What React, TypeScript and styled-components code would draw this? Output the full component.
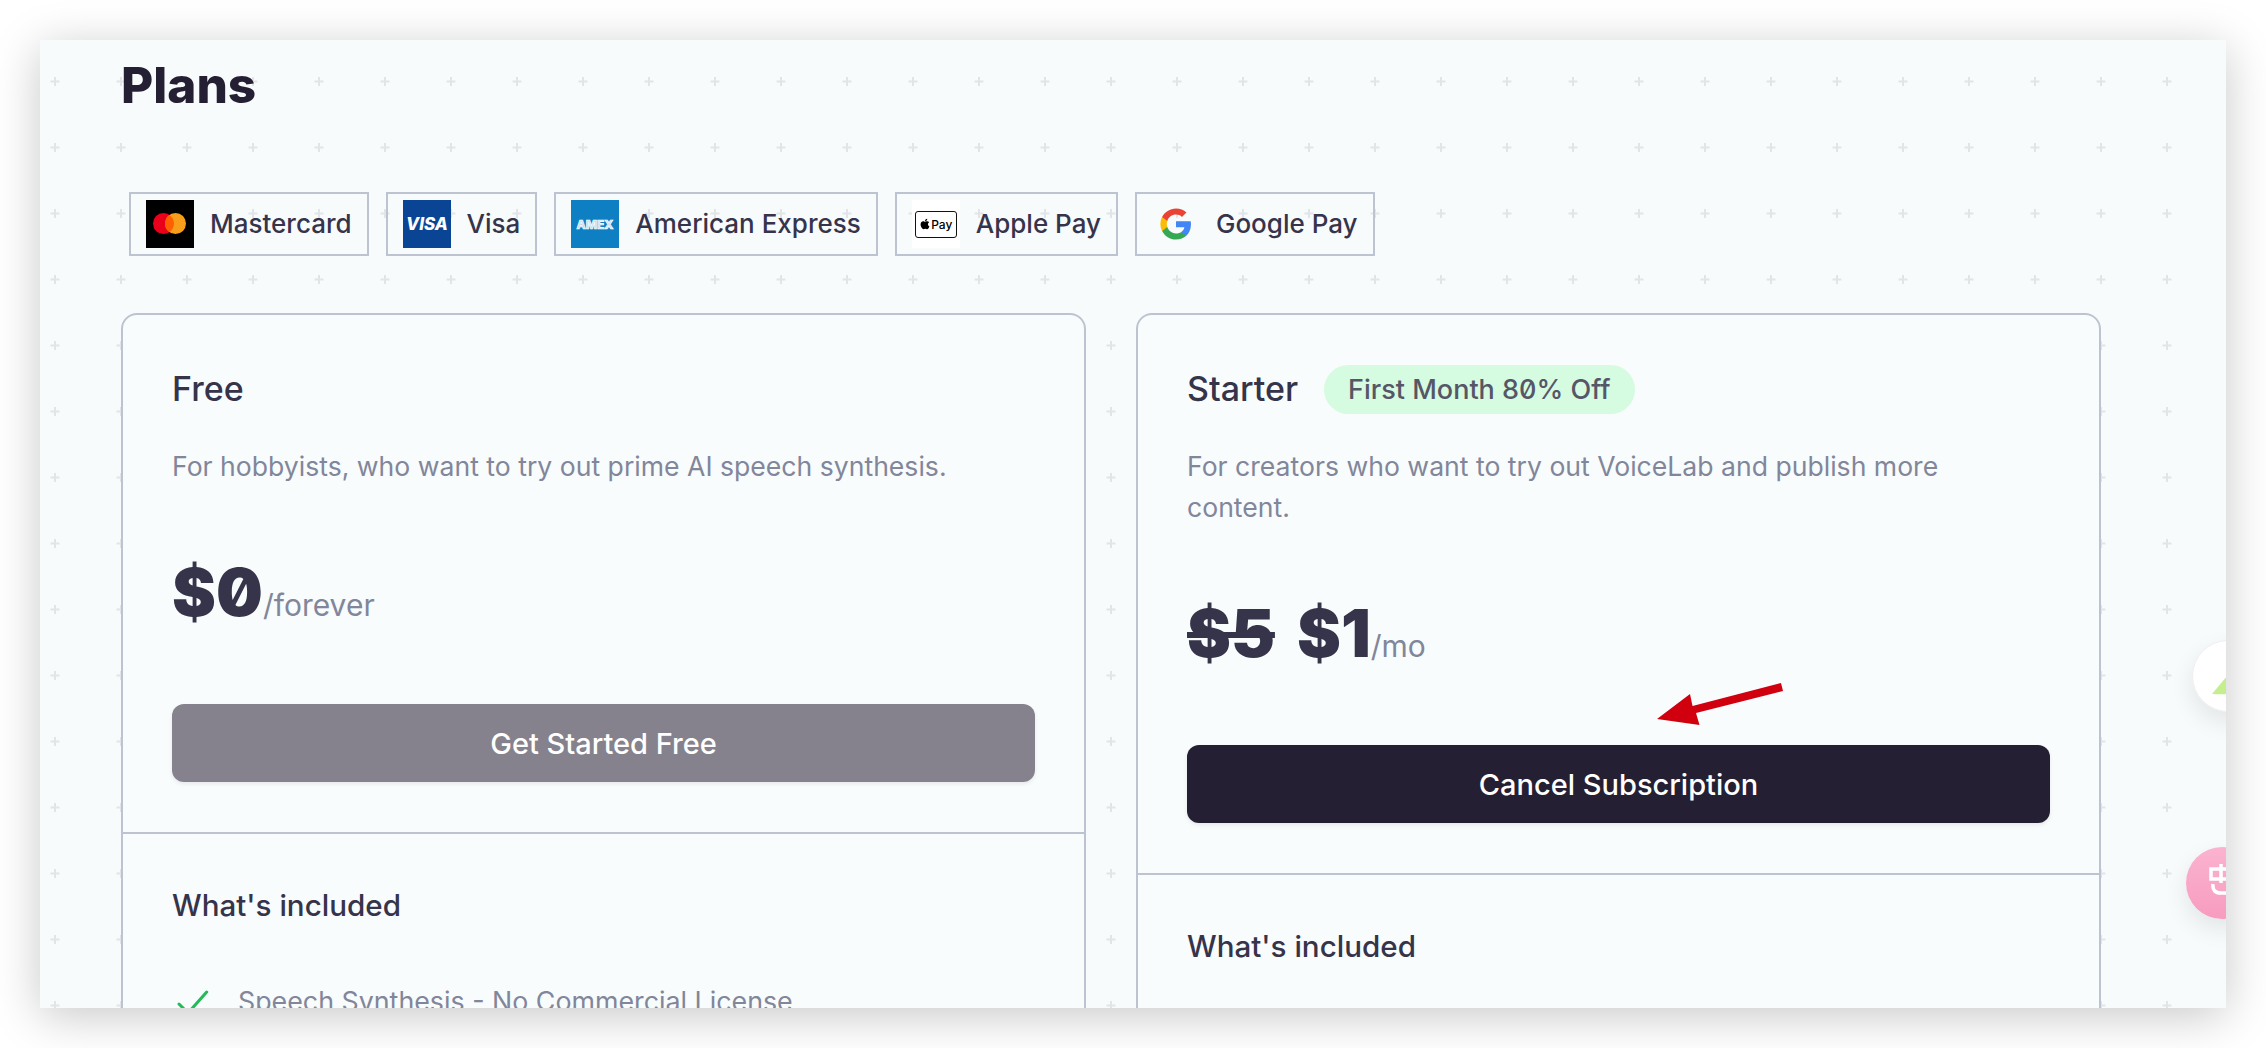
import React from 'react'
import styled, { createGlobalStyle } from 'styled-components'
import { FaApple } from 'react-icons/fa'

const plus = `url("data:image/svg+xml,%3Csvg xmlns='http://www.w3.org/2000/svg' width='66' height='66'%3E%3Cpath d='M15 37v9M10.500 41.500h9' stroke='%23e2e5e8' stroke-width='2' fill='none'/%3E%3C/svg%3E")`

const GlobalStyle = createGlobalStyle`
    html, body {
        margin: 0;
        background: #fff;
    }
    * {
        box-sizing: border-box;
    }
`

const Page = styled.div`
    width: 2266px;
    height: 1048px;
    padding: 40px;
    overflow: hidden;
    font-family: 'Inter', 'Liberation Sans', sans-serif;
`

const Shot = styled.div`
    position: relative;
    width: 2186px;
    height: 968px;
    overflow: hidden;
    padding: 16px 125px 0 81px;
    background-color: #f8fbfc;
    background-image: ${plus};
    box-shadow: 0 8px 44px rgba(0, 0, 0, 0.22);
`

const Title = styled.h1`
    margin: 0;
    font-size: 49.5px;
    line-height: 58px;
    font-weight: 800;
    color: #251f33;
`

const Methods = styled.div`
    display: flex;
    gap: 17px;
    margin: 78px 0 0 8px;
`

const Method = styled.div`
    display: flex;
    align-items: center;
    gap: 16px;
    height: 64px;
    padding: 0 15px;
    border: 2px solid #bec3d2;
    font-size: 26px;
    font-weight: 500;
    color: #36344a;
`

const MethodName = styled.span`
    padding-bottom: 2px;
`

const Logo = styled.svg`
    display: block;
    width: 48px;
    height: 48px;
    flex: none;
`

const ApplePay = styled.div`
    display: flex;
    align-items: center;
    justify-content: center;
    width: 48px;
    height: 48px;
    background: #fff;
`

const ApplePayMark = styled.div`
    display: flex;
    align-items: center;
    justify-content: center;
    width: 42px;
    height: 27px;
    border: 1px solid #111;
    border-radius: 3px;
    font-size: 12px;
    font-weight: 500;
    color: #000;
`

const Cards = styled.div`
    display: grid;
    grid-template-columns: 1fr 1fr;
    gap: 50px;
    margin-top: 57px;
    align-items: start;
`

const Card = styled.section`
    position: relative;
    border: 2px solid #bec3d2;
    border-radius: 16px;
    background: #f8fcfd;
    height: 800px;
`

const CardTop = styled.div`
    padding: 50px 49px;
    border-bottom: 2px solid #bec3d2;
`

const CardHead = styled.div`
    display: flex;
    align-items: center;
    gap: 26px;
    height: 49px;
`

const CardName = styled.h2`
    margin: 0;
    padding-bottom: 2px;
    font-size: 34px;
    font-weight: 500;
    color: #36344a;
`

const Badge = styled.span`
    display: flex;
    align-items: center;
    height: 49px;
    padding: 0 24px;
    border-radius: 25px;
    background: #d5fbe0;
    font-size: 27px;
    font-weight: 500;
    color: #565668;
    font-feature-settings: 'zero';
`

const Desc = styled.p`
    margin: 32px 0 0;
    max-width: 840px;
    font-size: 26.6px;
    line-height: 41px;
    color: #82869a;
`

const Price = styled.div`
    display: flex;
    align-items: baseline;
    margin-top: 60px;
    height: 90px;
    font-size: 66px;
    line-height: 90px;
    font-weight: 900;
    color: #36344a;
    font-feature-settings: 'zero';
`

const OldPrice = styled.s`
    margin-right: 22px;
`

const Per = styled.span`
    font-size: 30px;
    font-weight: 400;
    color: #82869a;
`

const CardButton = styled.button<{ $muted?: boolean }>`
    display: block;
    width: 100%;
    height: 78px;
    margin-top: 67px;
    border: 0;
    border-radius: 12px;
    background: ${(p) => (p.$muted ? '#85828e' : '#251f33')};
    box-shadow: 0 2px 4px rgba(0, 0, 0, 0.08);
    font-family: inherit;
    font-size: 29px;
    font-weight: 500;
    color: #fff;
`

const CardBottom = styled.div`
    padding: 49px;
`

const Included = styled.h3`
    margin: 0;
    font-size: 29.6px;
    line-height: 44px;
    font-weight: 500;
    color: #36344a;
`

const Feature = styled.div`
    display: flex;
    align-items: flex-start;
    gap: 26px;
    margin-top: 56px;
    font-size: 26.8px;
    line-height: 36px;
    color: #82869a;
`

const Check = styled.svg`
    width: 40px;
    height: 40px;
    flex: none;
`

const Arrow = styled.svg`
    position: absolute;
    left: 519px;
    top: 368px;
    width: 126px;
    height: 44px;
`

const FloatBall = styled.div<{ $pink?: boolean }>`
    position: absolute;
    width: 72px;
    height: 72px;
    border-radius: 50%;
    overflow: hidden;
    left: ${(p) => (p.$pink ? '2146px' : '2152px')};
    top: ${(p) => (p.$pink ? '807px' : '600px')};
    background: ${(p) => (p.$pink ? 'linear-gradient(180deg, #fbb3d0, #f79cbf)' : '#fff')};
    border: ${(p) => (p.$pink ? '0' : '1px solid #eee')};
`

const BallShadow = styled.div<{ $pink?: boolean }>`
    position: absolute;
    width: 72px;
    height: 72px;
    border-radius: 50%;
    left: ${(p) => (p.$pink ? '2146px' : '2152px')};
    top: ${(p) => (p.$pink ? '807px' : '600px')};
    box-shadow: 0 10px 24px rgba(0, 0, 0, 0.09);
`

const BallIcon = styled.svg`
    position: absolute;
    left: 0;
    top: 0;
    width: 72px;
    height: 72px;
`

function VisaLogo() {
    return (
        <Logo viewBox="0 0 48 48">
            <rect width="48" height="48" fill="#0a4595" />
            <text x="24" y="30" textAnchor="middle" fontFamily="Inter, sans-serif" fontSize="17" fontWeight="800" fontStyle="italic" fill="#fff">
                VISA
            </text>
        </Logo>
    )
}

function AmexLogo() {
    return (
        <Logo viewBox="0 0 48 48">
            <rect width="48" height="48" fill="#0f7fc4" />
            <text x="24" y="28.500" textAnchor="middle" fontFamily="Inter, sans-serif" fontSize="12" fontWeight="800" fill="#bfdff2" stroke="#fff" strokeWidth="0.7">
                AMEX
            </text>
        </Logo>
    )
}

function MastercardLogo() {
    return (
        <Logo viewBox="0 0 48 48">
            <rect width="48" height="48" fill="#000" />
            <circle cx="17.500" cy="23.500" r="10.500" fill="#eb001b" />
            <circle cx="29.500" cy="23.500" r="10.500" fill="#f79e1b" />
            <path d="M23.500 14.900a10.500 10.500 0 0 1 0 17.200a10.500 10.500 0 0 1 0-17.200z" fill="#ff5f00" />
        </Logo>
    )
}

function GoogleLogo() {
    return (
        <Logo viewBox="0 0 48 48">
            <g transform="translate(7 7) scale(1.417)">
                <path fill="#4285F4" d="M22.560 12.250c0-.78-.07-1.530-.2-2.250H12v4.260h5.920c-.26 1.370-1.040 2.530-2.210 3.310v2.770h3.570c2.080-1.920 3.280-4.740 3.280-8.090z" />
                <path fill="#34A853" d="M12 23c2.970 0 5.460-.98 7.280-2.660l-3.570-2.770c-.98.660-2.230 1.060-3.710 1.060-2.860 0-5.290-1.930-6.160-4.530H2.180v2.840C3.990 20.530 7.700 23 12 23z" />
                <path fill="#FBBC05" d="M5.840 14.090c-.22-.66-.35-1.360-.35-2.090s.13-1.430.35-2.090V7.070H2.180C1.430 8.550 1 10.220 1 12s.43 3.450 1.180 4.930l3.660-2.840z" />
                <path fill="#EA4335" d="M12 5.380c1.620 0 3.060.56 4.210 1.640l3.150-3.150C17.450 2.090 14.970 1 12 1 7.700 1 3.990 3.470 2.180 7.070l3.660 2.840c.87-2.600 3.300-4.530 6.160-4.530z" />
            </g>
        </Logo>
    )
}

export default function App() {
    return (
        <Page>
            <GlobalStyle />
            <Shot>
                <Title>Plans</Title>
                <Methods>
                    <Method>
                        <MastercardLogo />
                        <MethodName>Mastercard</MethodName>
                    </Method>
                    <Method>
                        <VisaLogo />
                        <MethodName>Visa</MethodName>
                    </Method>
                    <Method>
                        <AmexLogo />
                        <MethodName>American Express</MethodName>
                    </Method>
                    <Method>
                        <ApplePay>
                            <ApplePayMark>
                                <FaApple size={12} />
                                Pay
                            </ApplePayMark>
                        </ApplePay>
                        <MethodName>Apple Pay</MethodName>
                    </Method>
                    <Method>
                        <GoogleLogo />
                        <MethodName>Google Pay</MethodName>
                    </Method>
                </Methods>
                <Cards>
                    <Card>
                        <CardTop>
                            <CardHead>
                                <CardName>Free</CardName>
                            </CardHead>
                            <Desc>For hobbyists, who want to try out prime AI speech synthesis.</Desc>
                            <Price>
                                $0<Per>/forever</Per>
                            </Price>
                            <CardButton $muted>Get Started Free</CardButton>
                        </CardTop>
                        <CardBottom>
                            <Included>What's included</Included>
                            <Feature>
                                <Check viewBox="0 0 40 40">
                                    <path d="M7 21L16 30L34.700 9" fill="none" stroke="#22bb55" strokeWidth="3" strokeLinecap="round" />
                                </Check>
                                Speech Synthesis - No Commercial License
                            </Feature>
                        </CardBottom>
                    </Card>
                    <Card>
                        <CardTop>
                            <CardHead>
                                <CardName>Starter</CardName>
                                <Badge>First Month 80% Off</Badge>
                            </CardHead>
                            <Desc>For creators who want to try out VoiceLab and publish more content.</Desc>
                            <Price>
                                <OldPrice>$5</OldPrice>$1<Per>/mo</Per>
                            </Price>
                            <CardButton>Cancel Subscription</CardButton>
                        </CardTop>
                        <CardBottom>
                            <Included>What's included</Included>
                        </CardBottom>
                        <Arrow viewBox="0 0 126 44">
                            <polygon points="124,0 126,8 39,30 42.500,42 0,36 33,11 35.500,23" fill="#d0000f" />
                        </Arrow>
                    </Card>
                </Cards>
                <BallShadow />
                <FloatBall>
                    <BallIcon viewBox="0 0 72 72">
                        <path d="M19 53 L34 35 L46 30 L46 52 Q30 54 19 53z" fill="#c5ee8e" />
                    </BallIcon>
                </FloatBall>
                <BallShadow $pink />
                <FloatBall $pink>
                    <BallIcon viewBox="0 0 72 72">
                        <path d="M25 22h20v10H25zM35 17v19M27 37q-1 9 8 9h6" fill="none" stroke="#fff" strokeWidth="3.500" />
                    </BallIcon>
                </FloatBall>
            </Shot>
        </Page>
    )
}
